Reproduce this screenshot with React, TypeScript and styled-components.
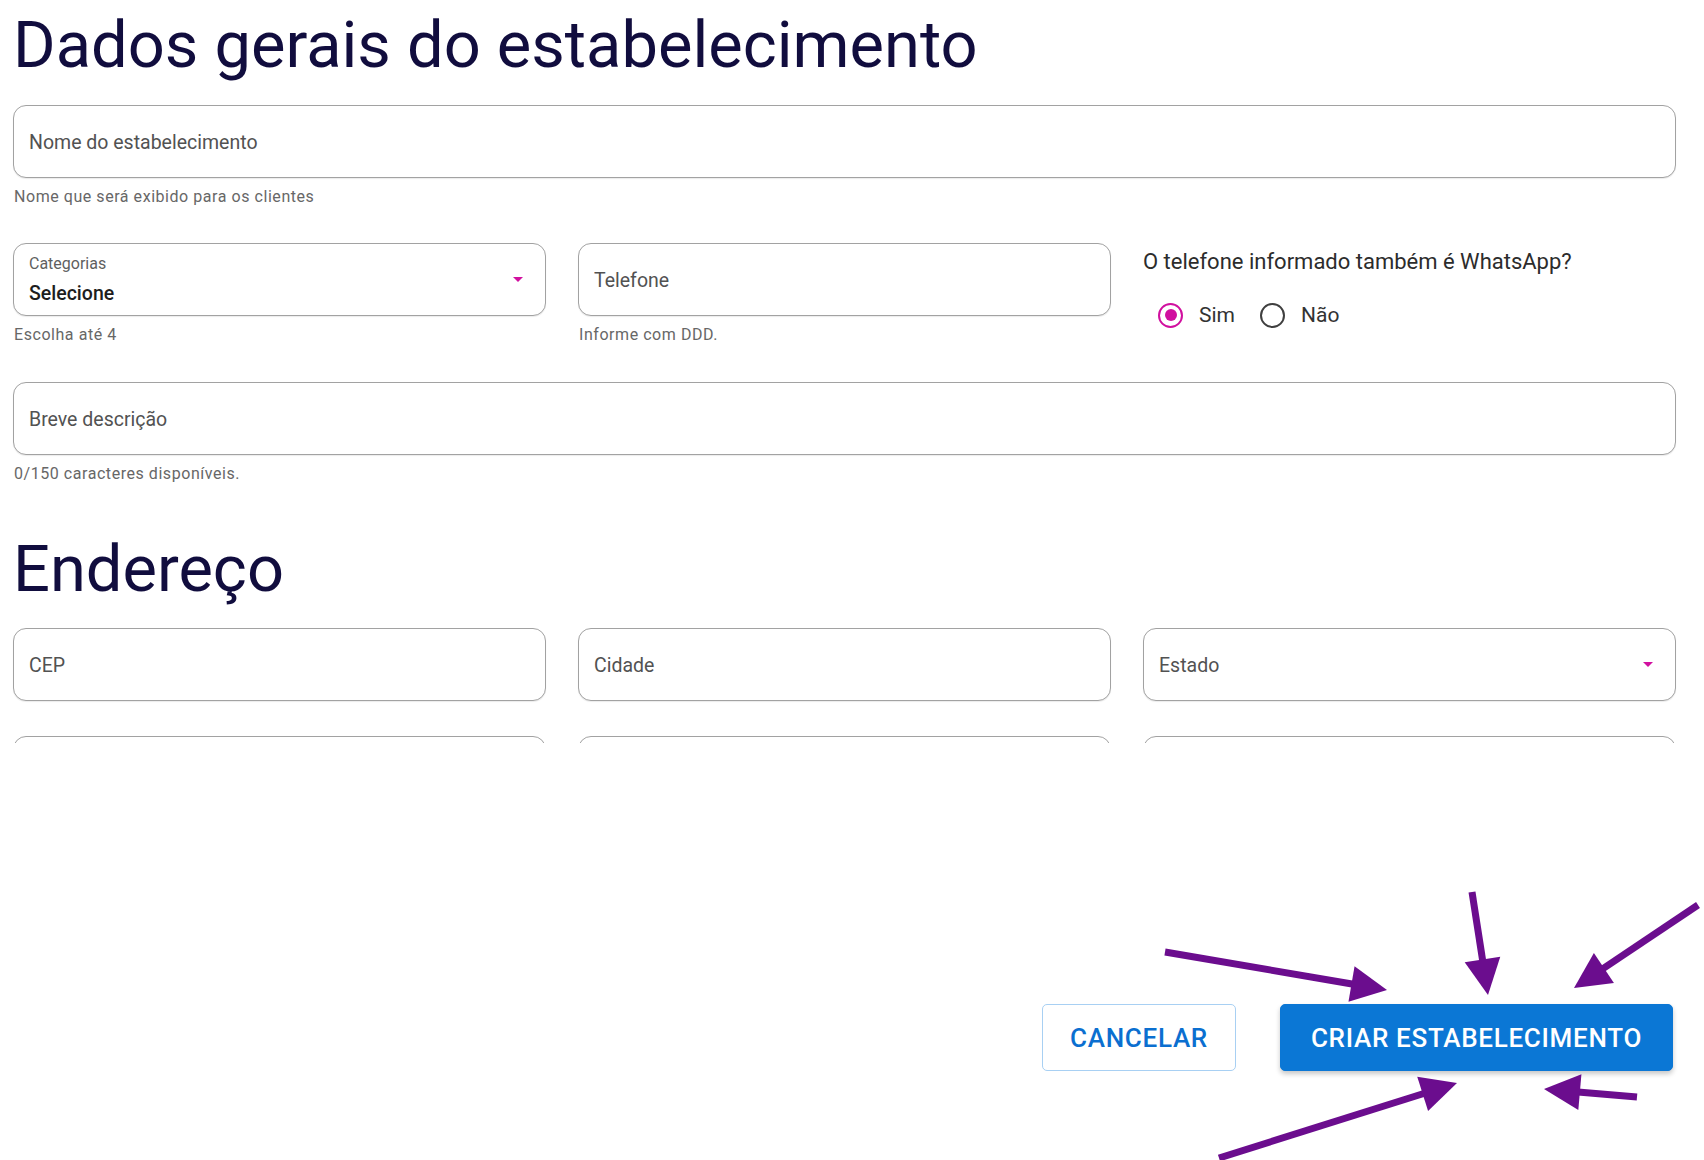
import React from "react";
import styled, { createGlobalStyle } from "styled-components";

const GlobalStyle = createGlobalStyle`
  html, body {
    margin: 0;
    padding: 0;
    background: #ffffff;
    font-family: Roboto, "Liberation Sans", Arial, sans-serif;
  }
  * {
    box-sizing: border-box;
  }
`;

const Page = styled.div`
  position: relative;
  width: 1704px;
  height: 1160px;
  display: flex;
  flex-direction: column;
  overflow: hidden;
`;

const Scroller = styled.div`
  height: 743px;
  overflow: hidden;
  padding: 8px 28px 0 13px;
`;

const Title = styled.h1<{ $top?: number }>`
  margin: ${(p) => p.$top ?? 0}px 0 0 0;
  font-size: 65px;
  line-height: 75px;
  font-weight: 400;
  color: #110d3e;
`;

const TextField = styled.input<{ $top?: number }>`
  display: block;
  width: 100%;
  height: 73px;
  margin-top: ${(p) => p.$top ?? 0}px;
  padding: 2px 15px 0;
  border: 1.5px solid #a2a2a2;
  border-radius: 13px;
  box-shadow: 0 1px 1px rgba(0, 0, 0, 0.08);
  background: #fff;
  font-family: inherit;
  font-size: 19.5px;
  color: #222;
  outline: none;

  &::placeholder {
    color: #525252;
    opacity: 1;
  }
`;

const Helper = styled.div`
  margin-top: 9px;
  padding-left: 1px;
  font-size: 16px;
  line-height: 20px;
  letter-spacing: 0.55px;
  color: #676767;
`;

const Row = styled.div<{ $top: number }>`
  display: grid;
  grid-template-columns: repeat(3, 533px);
  column-gap: 32px;
  margin-top: ${(p) => p.$top}px;
`;

const Column = styled.div`
  display: flex;
  flex-direction: column;
`;

const SelectBox = styled.div`
  display: flex;
  align-items: center;
  justify-content: space-between;
  height: 73px;
  padding: 0 22px 0 15px;
  border: 1.5px solid #a2a2a2;
  border-radius: 13px;
  box-shadow: 0 1px 1px rgba(0, 0, 0, 0.08);
  background: #fff;
`;

const SelectText = styled.div<{ $stacked?: boolean }>`
  display: flex;
  flex-direction: column;
  align-self: ${(p) => (p.$stacked ? "stretch" : "center")};
  padding-top: ${(p) => (p.$stacked ? 10 : 2)}px;
`;

const SelectLabel = styled.span`
  font-size: 16px;
  line-height: 19px;
  color: #5f5f5f;
`;

const SelectValue = styled.span<{ $placeholder?: boolean }>`
  margin-top: ${(p) => (p.$placeholder ? 0 : 9)}px;
  font-size: 19.5px;
  line-height: 23px;
  font-weight: ${(p) => (p.$placeholder ? 400 : 500)};
  color: ${(p) => (p.$placeholder ? "#525252" : "#1d1d1d")};
`;

const Caret = styled.svg`
  flex: none;
  width: 10px;
  height: 5px;
`;

const Question = styled.div`
  margin-top: 6px;
  font-size: 22px;
  line-height: 25px;
  color: #2c2c2c;
`;

const RadioRow = styled.div`
  display: flex;
  align-items: center;
  gap: 25px;
  height: 26px;
  margin-top: 28px;
  padding-left: 15px;
`;

const RadioOption = styled.label`
  display: flex;
  align-items: center;
  gap: 16px;
  font-size: 21px;
  color: #333;
`;

const RadioCircle = styled.span<{ $checked?: boolean }>`
  display: flex;
  align-items: center;
  justify-content: center;
  width: 25px;
  height: 25px;
  border-radius: 50%;
  border: 2.5px solid ${(p) => (p.$checked ? "#d1109f" : "#3f3f3f")};

  &::after {
    content: "";
    display: ${(p) => (p.$checked ? "block" : "none")};
    width: 12px;
    height: 12px;
    border-radius: 50%;
    background: #d1109f;
  }
`;

const Footer = styled.div`
  margin-top: auto;
  display: flex;
  justify-content: flex-end;
  gap: 44px;
  padding: 0 31px 89px 0;
`;

const Button = styled.button<{ $primary?: boolean }>`
  height: 67px;
  padding: 0 ${(p) => (p.$primary ? 30 : 27)}px;
  border-radius: 5px;
  border: 1.5px solid ${(p) => (p.$primary ? "#0b77d5" : "#a8d0f3")};
  background: ${(p) => (p.$primary ? "#0b77d5" : "#ffffff")};
  color: ${(p) => (p.$primary ? "#ffffff" : "#0b6fd0")};
  box-shadow: ${(p) => (p.$primary ? "0 3px 5px rgba(0, 0, 0, 0.22)" : "none")};
  font-family: inherit;
  font-size: 26px;
  font-weight: 500;
  letter-spacing: 0.7px;
  text-transform: uppercase;
  cursor: pointer;
`;

const ArrowLayer = styled.svg`
  position: absolute;
  top: 0;
  left: 0;
  width: 1704px;
  height: 1160px;
  pointer-events: none;
`;

const Select = ({ label, value }: { label?: string; value: string }) => (
  <SelectBox>
    <SelectText $stacked={!!label}>
      {label && <SelectLabel>{label}</SelectLabel>}
      <SelectValue $placeholder={!label}>{value}</SelectValue>
    </SelectText>
    <Caret viewBox="0 0 10 5">
      <path d="M0 0h10L5 5z" fill="#d1109f" />
    </Caret>
  </SelectBox>
);

// annotation arrows: start x, start y, tip x, tip y
const arrows = [
  [1165, 952, 1387, 990],
  [1472, 892, 1488, 995],
  [1698, 905, 1574, 988],
  [1219, 1158, 1457, 1083],
  [1637, 1097, 1544, 1089],
];

const Arrow = ({ a }: { a: number[] }) => {
  const [x1, y1, x2, y2] = a;
  const len = Math.hypot(x2 - x1, y2 - y1);
  const ux = (x2 - x1) / len;
  const uy = (y2 - y1) / len;
  const bx = x2 - ux * 36;
  const by = y2 - uy * 36;
  const pts = `${x2},${y2} ${bx - uy * 18},${by + ux * 18} ${bx + uy * 18},${by - ux * 18}`;
  return (
    <g>
      <line x1={x1} y1={y1} x2={bx + ux * 2} y2={by + uy * 2} stroke="#6b0d8e" strokeWidth={7} />
      <polygon points={pts} fill="#6b0d8e" />
    </g>
  );
};

export default function App() {
  return (
    <Page>
      <GlobalStyle />
      <Scroller>
        <Title>Dados gerais do estabelecimento</Title>
        <TextField $top={22} placeholder="Nome do estabelecimento" />
        <Helper>Nome que será exibido para os clientes</Helper>

        <Row $top={36}>
          <Column>
            <Select label="Categorias" value="Selecione" />
            <Helper>Escolha até 4</Helper>
          </Column>
          <Column>
            <TextField placeholder="Telefone" />
            <Helper>Informe com DDD.</Helper>
          </Column>
          <Column>
            <Question>O telefone informado também é WhatsApp?</Question>
            <RadioRow>
              <RadioOption>
                <RadioCircle $checked />
                Sim
              </RadioOption>
              <RadioOption>
                <RadioCircle />
                Não
              </RadioOption>
            </RadioRow>
          </Column>
        </Row>

        <TextField $top={37} placeholder="Breve descrição" />
        <Helper>0/150 caracteres disponíveis.</Helper>

        <Title $top={48}>Endereço</Title>
        <Row $top={21}>
          <TextField placeholder="CEP" />
          <TextField placeholder="Cidade" />
          <Select value="Estado" />
        </Row>
        <Row $top={35}>
          <TextField placeholder="Bairro" />
          <TextField placeholder="Rua" />
          <TextField placeholder="Número" />
        </Row>
      </Scroller>

      <Footer>
        <Button>Cancelar</Button>
        <Button $primary>Criar estabelecimento</Button>
      </Footer>

      <ArrowLayer viewBox="0 0 1704 1160">
        {arrows.map((a, i) => (
          <Arrow key={i} a={a} />
        ))}
      </ArrowLayer>
    </Page>
  );
}
